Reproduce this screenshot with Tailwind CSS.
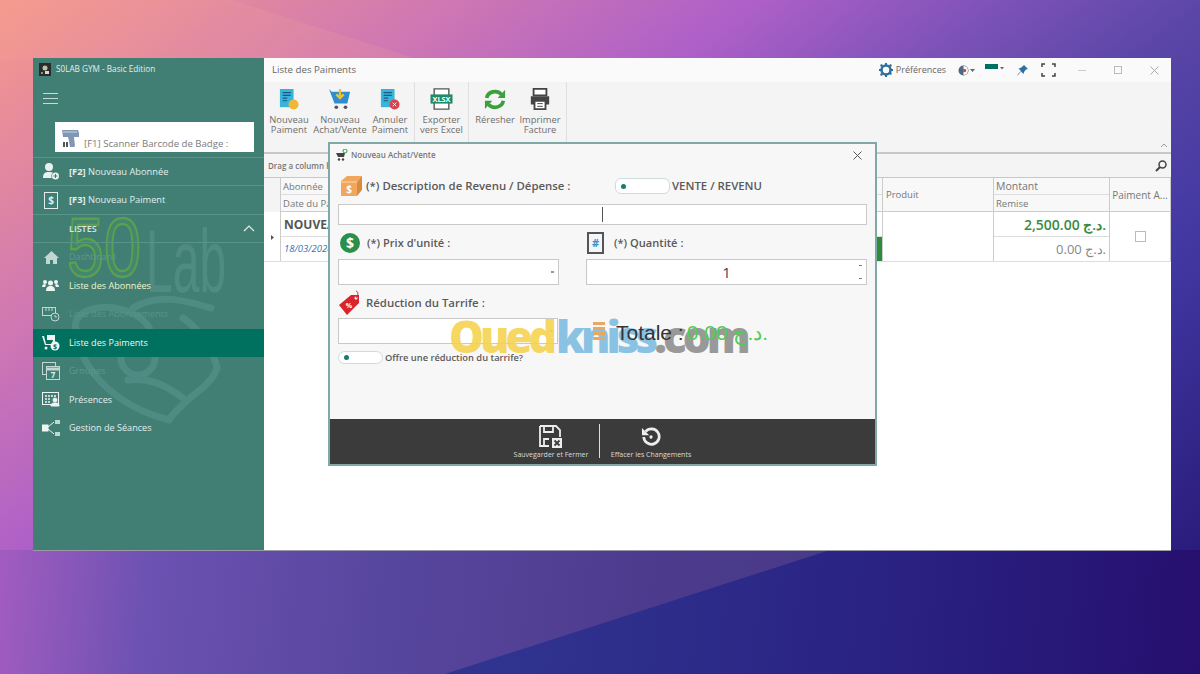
<!DOCTYPE html>
<html lang="en">
<head>
    <meta charset="UTF-8">
    <title>S0LAB GYM - Basic Edition</title>
    <script src="https://cdn.jsdelivr.net/npm/@tailwindcss/browser@4"></script>
</head>
<body class="relative w-[1200px] h-[674px] overflow-hidden font-['Open_Sans',sans-serif] bg-[#6a4bb5]">
    <!-- wallpaper -->
    <svg class="absolute inset-0" width="1200" height="674" viewBox="0 0 1200 674">
        <defs>
            <linearGradient id="bgA" gradientUnits="userSpaceOnUse" x1="0" y1="0" x2="755" y2="1007">
                <stop offset="0" stop-color="#f6998b"/>
                <stop offset="0.2" stop-color="#d27ab0"/>
                <stop offset="0.36" stop-color="#ae60c8"/>
                <stop offset="0.48" stop-color="#7c52b8"/>
                <stop offset="0.58" stop-color="#5a46a6"/>
                <stop offset="0.72" stop-color="#4238a2"/>
                <stop offset="0.92" stop-color="#2a1c7c"/>
            </linearGradient>
            <linearGradient id="bgB" gradientUnits="userSpaceOnUse" x1="500" y1="600" x2="1200" y2="674">
                <stop offset="0" stop-color="#30348f"/>
                <stop offset="0.5" stop-color="#2a2484"/>
                <stop offset="1" stop-color="#260f6e"/>
            </linearGradient>
            <linearGradient id="bgC" gradientUnits="userSpaceOnUse" x1="0" y1="560" x2="820" y2="640">
                <stop offset="0" stop-color="#a25cc0"/>
                <stop offset="0.18" stop-color="#6c52b2"/>
                <stop offset="0.45" stop-color="#58479f"/>
                <stop offset="0.8" stop-color="#4c3b8c"/>
                <stop offset="1" stop-color="#493a88"/>
            </linearGradient>
        </defs>
        <rect width="1200" height="674" fill="url(#bgA)"/>
        <polygon points="0,0 232,0 420,60 0,60" fill="#f4a59a" opacity="0.18"/>
        <polygon points="0,550 830,550 445,674 0,674" fill="url(#bgC)"/>
        <polygon points="830,550 445,674 1200,674 1200,550" fill="url(#bgB)"/>
    </svg>

    <!-- app window -->
    <div class="absolute left-[33px] top-[58px] w-[1138px] h-[492px] flex bg-white shadow-[0_1px_0_#9a9aa8]">
        <!-- sidebar -->
        <aside class="relative w-[231px] shrink-0 bg-[#417f75] text-white overflow-hidden">
            <!-- watermark logo -->
            <svg class="absolute left-0 top-[150px]" width="231" height="280" viewBox="0 0 231 280" fill="none">
                <text transform="translate(34 68) scale(0.95 1.2)" font-family="Liberation Sans" font-size="70" stroke="#59a050" stroke-width="2" fill="#45866f">50</text>
                <text transform="translate(113 84) scale(0.6 1.12)" font-family="Liberation Sans" font-size="80" fill="#4f8b82">Lab</text>
                <g stroke="#4e8b82" stroke-width="7" stroke-linecap="round" stroke-linejoin="round">
                    <ellipse cx="80" cy="122" rx="38" ry="22" transform="rotate(10 80 122)"/>
                    <path d="M42 122 C50 170 90 200 136 212 C150 190 178 180 184 160 C180 140 165 120 150 110"/>
                    <path d="M100 100 C125 85 150 92 178 100"/>
                    <path d="M95 172 C115 170 130 175 150 190"/>
                    <circle cx="105" cy="150" r="17"/>
                </g>
            </svg>

            <div class="relative flex items-center gap-[5px] h-[23px] pl-[6px] text-[8.200px] text-[#e3eeec]">
                <svg width="12" height="13" viewBox="0 0 12 13"><rect width="12" height="13" fill="#2b2b2b"/><circle cx="6" cy="5" r="2.500" fill="#b9c4a8"/><rect x="6" y="8" width="4" height="3" fill="#d9d9d9"/><rect x="2" y="9" width="2" height="2" fill="#8a9a70"/></svg>
                <span>S0LAB GYM - Basic Edition</span>
            </div>
            <div class="relative flex flex-col gap-[4px] w-[15px] ml-[10px] mt-[12px]">
                <div class="h-px bg-[#c7dbd7]"></div><div class="h-px bg-[#c7dbd7]"></div><div class="h-px bg-[#c7dbd7]"></div>
            </div>
            <div class="relative flex items-end ml-[22px] mt-[18px] w-[199px] h-[30px] bg-white pl-[7px] pb-[1px] text-[9.600px] text-[#7b7b7b] gap-[5px]">
                <svg width="17" height="19" viewBox="0 0 17 19" class="mb-[3px]"><path d="M0 1h16l1 3v4h-5l1 9-1 1h-4l-1-6-1-4H1z" fill="#8198b4"/><path d="M1 3h14" stroke="#c9d4e0"/><rect x="1" y="13" width="2" height="5" fill="#555"/><rect x="4" y="13" width="2" height="5" fill="#555"/></svg>
                <span>[F1] Scanner Barcode de Badge :</span>
            </div>

            <div class="relative mt-[5px] flex items-center h-[28px] border-t border-[#5b938a] pl-[10px] gap-[10px] text-[9.300px] text-[#e3eeec]">
                <svg width="16" height="17" viewBox="0 0 16 17" fill="#e8f1ef"><circle cx="6" cy="4" r="4"/><path d="M0 15c0-5 2-6 6-6 2 0 3 .3 4 1-2 1-2 4-1 5z"/><circle cx="12.500" cy="13" r="3.500"/><path d="M12.500 11v4M10.500 13h4" stroke="#417f75" stroke-width="1"/></svg>
                <span><b class="font-bold">[F2]</b> Nouveau Abonnée</span>
            </div>
            <div class="relative flex items-center h-[29px] border-t border-[#5b938a] pl-[11px] gap-[11px] text-[9.300px] text-[#e3eeec]">
                <span class="flex items-center justify-center w-[14px] h-[17px] border border-[#e3eeec] text-[10px] font-bold">$</span>
                <span><b class="font-bold">[F3]</b> Nouveau Paiment</span>
            </div>

            <div class="relative flex items-center justify-between h-[29px] border-t border-b border-[#5b938a] pl-[36px] pr-[9px] text-[9px] font-semibold text-[#dbe8e5]">
                <span>LISTES</span>
                <svg width="12" height="7" viewBox="0 0 12 7" fill="none" stroke="#e3eeec" stroke-width="1.200"><path d="M1 6l5-5 5 5"/></svg>
            </div>

            <nav class="relative text-[9.100px]">
                <div class="flex items-center h-[28.500px] pl-[11px] gap-[10px] text-[#5f978e]">
                    <svg width="15" height="13" viewBox="0 0 15 13" fill="#c2d6d2"><path d="M7.500 0L15 7h-2v6H9V9H6v4H2V7H0z"/></svg><span>Dashboard</span>
                </div>
                <div class="flex items-center h-[28.500px] pl-[9px] gap-[10px] text-[#f0f6c8]">
                    <svg width="17" height="15" viewBox="0 0 17 15" fill="#eef5f3"><circle cx="8.500" cy="5" r="2.500"/><path d="M4 13c0-4 2-5 4.500-5s4.500 1 4.500 5z"/><circle cx="3" cy="4" r="2"/><circle cx="14" cy="4" r="2"/><path d="M0 9c0-2 1-3 3-3l1 1-1 2zM17 9c0-2-1-3-3-3l-1 1 1 2z"/></svg><span>Liste des Abonnées</span>
                </div>
                <div class="flex items-center h-[28.500px] pl-[9px] gap-[9px] text-[#5a9188]">
                    <svg width="18" height="15" viewBox="0 0 18 15" fill="none" stroke="#c2d6d2"><rect x=".5" y=".5" width="13" height="8"/><path d="M4 1v3M7 1v3M10 1v3"/><circle cx="13" cy="10" r="4" fill="#417f75"/><path d="M13 8v2h2"/></svg><span>Liste des Abonnements</span>
                </div>
                <div class="flex items-center h-[28.500px] pl-[9px] gap-[9px] bg-[#00715f] text-[#eef5f3]">
                    <svg width="18" height="16" viewBox="0 0 18 16" fill="#eef5f3"><path d="M0 1h2l2 8h6l1-4H5V0h8v6l-2 4H3z"/><circle cx="4" cy="13" r="1.500"/><circle cx="13" cy="11" r="4.500"/><text x="13" y="14" font-size="7" font-weight="700" text-anchor="middle" fill="#00715f">$</text></svg><span>Liste des Paiments</span>
                </div>
                <div class="flex items-center h-[28.500px] pl-[9px] gap-[9px] text-[#5f978e]">
                    <svg width="18" height="18" viewBox="0 0 18 18" fill="none" stroke="#c2d6d2"><rect x=".5" y=".5" width="13" height="12"/><rect x="4.500" y="4.500" width="13" height="13" fill="#417f75"/><path d="M4 7h14" stroke-width="3"/><text x="11" y="16" font-size="8" font-weight="700" text-anchor="middle" fill="#e3eeec" stroke="none">7</text></svg><span>Groupes</span>
                </div>
                <div class="flex items-center h-[28.500px] pl-[9px] gap-[9px] text-[#e3eeec]">
                    <svg width="18" height="15" viewBox="0 0 18 15" fill="none" stroke="#eef5f3"><rect x=".5" y=".5" width="16" height="12"/><path d="M3 4h11M3 7h6M3 10h6" stroke-width="1.500" stroke-dasharray="2 1"/><circle cx="13" cy="8" r="2" fill="#eef5f3"/><path d="M9 14c0-3 2-3 4-3s4 0 4 3z" fill="#eef5f3"/></svg><span>Présences</span>
                </div>
                <div class="flex items-center h-[28.500px] pl-[9px] gap-[9px] text-[#e3eeec]">
                    <svg width="18" height="16" viewBox="0 0 18 16" fill="none" stroke="#eef5f3"><rect x="0" y="5" width="6" height="6" fill="#eef5f3"/><rect x="13" y="0" width="5" height="4" fill="#c2d6d2" stroke="none"/><rect x="13" y="12" width="5" height="4" fill="#c2d6d2" stroke="none"/><path d="M6 7l6-5M6 9l6 5"/></svg><span>Gestion de Séances</span>
                </div>
            </nav>
        </aside>

        <!-- main panel -->
        <main class="flex-1 flex flex-col min-w-0 bg-white">
            <div class="flex items-center justify-between h-[24px] pl-[8px] bg-[#fafafa] text-[9.700px] text-[#666]">
                <span>Liste des Paiments</span>
                <div class="flex items-center h-full">
                    <svg width="14" height="14" viewBox="0 0 14 14" class="mr-[3px]" fill="#2d6f9e"><circle cx="7" cy="7" r="4.500" fill="none" stroke="#2d6f9e" stroke-width="2.500"/><path d="M6 0h2v2H6zM6 12h2v2H6zM0 6h2v2H0zM12 6h2v2h-2zM2 1l2 1-1 2-2-1zM12 1l1 2-2 1-1-2zM1 11l2-1 1 2-2 1zM13 11l-2 1-1-2 2-1z"/></svg>
                    <span class="mr-[12px] text-[9px]">Préférences</span>
                    <svg width="17" height="11" viewBox="0 0 17 11" class="mr-[10px]"><circle cx="5.500" cy="5.500" r="5" fill="#4a6a86"/><path d="M5.500 1a4.500 4.500 0 0 1 0 9z" fill="#fff"/><circle cx="6.500" cy="5.500" r="1.800" fill="#c8503c"/><path d="M12 4h5l-2.500 3z" fill="#666"/></svg>
                    <svg width="19" height="8" viewBox="0 0 19 8" class="mr-[13px] mb-[4px]"><rect width="13" height="5" fill="#00715f"/><path d="M15 3h4l-2 2.500z" fill="#666"/></svg>
                    <svg width="11" height="11" viewBox="0 0 11 11" class="mr-[13px]" fill="#2d6f9e"><path d="M7 0l4 4-2 .5-2 2.500-.5 2L4 6.500 1 10 0 11l1-2 3-3-2.500-2.500 2-.5 2.500-2z"/></svg>
                    <svg width="15" height="14" viewBox="0 0 15 14" class="mr-[22px]" fill="none" stroke="#444" stroke-width="1.500"><path d="M1 4V1h3M11 1h3v3M14 10v3h-3M4 13H1v-3"/></svg>
                    <div class="w-[8px] h-px bg-[#ccc] mr-[28px]"></div>
                    <div class="w-[8px] h-[8px] border border-[#bbb] mr-[28px]"></div>
                    <svg width="9" height="9" viewBox="0 0 9 9" class="mr-[12px]" stroke="#aaa" fill="none"><path d="M.5.500l8 8M8.500.500l-8 8"/></svg>
                </div>
            </div>

            <!-- ribbon -->
            <div class="relative flex h-[72px] bg-[#f4f4f4] border-b-2 border-[#c8c8c8] text-[9.400px] leading-[10px] text-[#6e6e6e] text-center">
                <div class="flex pl-[4px] pr-[4px] border-r border-[#e0e0e0]">
                    <div class="flex flex-col items-center w-[42px] pt-[6px]">
                        <svg width="20" height="22" viewBox="0 0 22 24"><path d="M1 1h15v20H1z" fill="#38b4dc"/><path d="M4 5h9M4 8h9M4 11h5M4 14h5" stroke="#1a5a80" stroke-width="1.200"/><circle cx="16" cy="18" r="5.500" fill="#f2b632"/></svg>
                        <span class="mt-[5px]">Nouveau<br>Paiment</span>
                    </div>
                    <div class="flex flex-col items-center w-[60px] pt-[6px]">
                        <svg width="22" height="22" viewBox="0 0 24 24"><path d="M0 1l3 3h20l-3 13H6z" fill="#2f8ed0"/><path d="M12 1v9M8 7l4 4 4-4" stroke="#f2c132" stroke-width="2.500" fill="none"/><circle cx="8" cy="21" r="2" fill="#555"/><circle cx="18" cy="21" r="2" fill="#555"/></svg>
                        <span class="mt-[5px] whitespace-nowrap">Nouveau<br>Achat/Vente</span>
                    </div>
                    <div class="flex flex-col items-center w-[40px] pt-[6px]">
                        <svg width="20" height="22" viewBox="0 0 22 24"><path d="M1 1h15v20H1z" fill="#38b4dc"/><path d="M4 5h9M4 8h9M4 11h5M4 14h5" stroke="#1a5a80" stroke-width="1.200"/><circle cx="16" cy="18" r="5.500" fill="#d9434e"/><path d="M14 16l4 4M18 16l-4 4" stroke="#fff"/></svg>
                        <span class="mt-[5px]">Annuler<br>Paiment</span>
                    </div>
                </div>
                <div class="flex flex-col items-center w-[54px] pt-[6px] border-r border-[#e0e0e0]">
                    <svg width="23" height="22" viewBox="0 0 24 24"><path d="M4 1h16v22H4z" fill="#fff" stroke="#555" stroke-width="1.500"/><rect x="0" y="7" width="24" height="10" fill="#1f8a6a"/><text x="12" y="15" font-size="8" font-weight="700" fill="#fff" text-anchor="middle" font-family="Open Sans">XLSX</text></svg>
                    <span class="mt-[5px]">Exporter<br>vers Excel</span>
                </div>
                <div class="flex pl-[3px] pr-[4px] border-r border-[#e0e0e0]">
                    <div class="flex flex-col items-center w-[46px] pt-[6px]">
                        <svg width="22" height="22" viewBox="0 0 24 24" fill="none" stroke="#3aa03c" stroke-width="4"><path d="M3 11a9 8 0 0 1 16-4"/><path d="M21 14a9 8 0 0 1-16 4"/><path d="M23 2v9h-8z" fill="#3aa03c" stroke="none"/><path d="M1 23v-9h8z" fill="#3aa03c" stroke="none"/></svg>
                        <span class="mt-[5px]">Réresher</span>
                    </div>
                    <div class="flex flex-col items-center w-[44px] pt-[6px]">
                        <svg width="22" height="22" viewBox="0 0 24 24"><path d="M5 1h14v7H5z" fill="#fff" stroke="#444" stroke-width="2"/><path d="M2 9h20v9H2z" fill="#444"/><path d="M6 14h12v9H6z" fill="#fff" stroke="#444" stroke-width="2"/><path d="M9 17h6M9 20h6" stroke="#444"/></svg>
                        <span class="mt-[5px]">Imprimer<br>Facture</span>
                    </div>
                </div>
                <svg class="absolute right-[3px] bottom-[4px]" width="8" height="5" viewBox="0 0 8 5" fill="none" stroke="#999"><path d="M1 4l3-3 3 3"/></svg>
            </div>

            <!-- group bar -->
            <div class="flex items-center justify-between h-[24px] pl-[4px] pr-[4px] bg-[#f4f4f4] border-b border-[#c8c8c8] text-[8px] font-semibold text-[#777]">
                <span>Drag a column header here to group by this column</span>
                <svg width="12" height="12" viewBox="0 0 12 12" fill="none" stroke="#444" stroke-width="1.500"><circle cx="7.500" cy="4.500" r="3.500"/><path d="M5 7l-4 4" stroke-width="2"/></svg>
            </div>

            <!-- table -->
            <div class="flex h-[84px] w-[907px] text-[9.500px] text-[#777] border-b border-[#ddd]">
                <div class="relative w-[16px] shrink-0">
                    <div class="h-[34px] bg-[#f4f4f4]"></div>
                    <svg class="absolute left-[7px] top-[57px]" width="3" height="5" viewBox="0 0 3 5" fill="#555"><path d="M0 0l3 2.500L0 5z"/></svg>
                </div>
                <div class="w-[602px] shrink-0 flex flex-col border-l border-[#ccc]">
                    <div class="h-[17px] pl-[2px] pt-[2px] flex items-center border-b border-[#ddd] bg-[#f8f8f8]">Abonnée</div>
                    <div class="h-[17px] pl-[2px] pt-[2px] flex items-center border-b border-[#ccc] bg-[#f8f8f8]">Date du Paiment</div>
                    <div class="h-[25px] pl-[3px] pt-[2px] flex items-center border-b border-[#ddd] text-[12px] font-bold text-[#555]">NOUVEAU</div>
                    <div class="h-[24px] pl-[3px] pt-[1px] flex items-center text-[9.500px] italic text-[#3d73b5]">18/03/2024</div>
                </div>
                <div class="w-[111px] shrink-0 flex flex-col border-l border-[#ccc]">
                    <div class="h-[34px] pl-[3px] pt-[2px] flex items-center border-b border-[#ccc] bg-[#f8f8f8]">Produit</div>
                </div>
                <div class="w-[116px] shrink-0 flex flex-col border-l border-[#ccc]">
                    <div class="h-[17px] pl-[2px] pt-[2px] flex items-center border-b border-[#ddd] bg-[#f8f8f8] text-[10.500px]">Montant</div>
                    <div class="h-[17px] pl-[2px] pt-[2px] flex items-center border-b border-[#ccc] bg-[#f8f8f8]">Remise</div>
                    <div class="h-[25px] pr-[3px] flex items-center justify-end border-b border-[#ddd] text-[14px] font-semibold text-[#3d8a40]">2,500.00 د.ج.</div>
                    <div class="h-[24px] pr-[3px] pt-[1px] flex items-center justify-end text-[13px] text-[#888]">0.00 د.ج.</div>
                </div>
                <div class="flex-1 flex flex-col border-l border-[#ccc] border-r">
                    <div class="h-[34px] pt-[1px] flex items-center justify-center border-b border-[#ccc] bg-[#f8f8f8] text-[10px] whitespace-nowrap">Paiment A...</div>
                    <div class="flex-1 flex items-center justify-center">
                        <div class="w-[11px] h-[11px] border border-[#bbb]"></div>
                    </div>
                </div>
            </div>
            <div class="flex-1 bg-white"></div>
        </main>
    </div>

    <!-- green status cell peeking past dialog -->
    <div class="absolute left-[876px] top-[237px] w-[6px] h-[24px] bg-[#2e8b3a]"></div>

    <!-- dialog -->
    <div class="absolute left-[328px] top-[142px] w-[549px] h-[324px] flex flex-col bg-[#f7f7f7] border-2 border-[#7fa8a6] text-[#5a5a5a]">
        <div class="flex items-center justify-between h-[22px] pl-[6px] pr-[13px] text-[8px] font-semibold text-[#777]">
            <span class="flex items-center gap-[3px]">
                <svg width="12" height="12" viewBox="0 0 12 12"><path d="M0 4h9l-1 4H2z" fill="#444"/><circle cx="3" cy="10.500" r="1.200" fill="#444"/><circle cx="7" cy="10.500" r="1.200" fill="#444"/><circle cx="9" cy="2" r="2" fill="none" stroke="#3a9a3c"/></svg>
                Nouveau Achat/Vente
            </span>
            <svg width="9" height="9" viewBox="0 0 9 9" fill="none" stroke="#555"><path d="M.5.500l8 8M8.500.500l-8 8"/></svg>
        </div>

        <div class="flex-1 pl-[8px] pr-[8px] text-[11.400px] font-semibold">
            <div class="flex items-center h-[26px] mt-[7px]">
                <svg width="23" height="22" viewBox="0 0 23 22" class="ml-[2px]"><path d="M1 6l6-5h15l-5 6v14H1z" fill="#f0a75c"/><path d="M17 7l5-6v14l-5 6z" fill="#d98a3d"/><path d="M1 7h16" stroke="#fbd9ae"/><text x="9" y="18" font-size="10" font-weight="700" text-anchor="middle" fill="#fff">$</text></svg>
                <span class="ml-[3px] w-[249px] whitespace-nowrap">(*) Description de Revenu / Dépense :</span>
                <div class="flex items-center w-[55px] h-[16px] pl-[5px] bg-white border border-[#cfdcdc] rounded-[6px]"><div class="w-[5px] h-[5px] rounded-full bg-[#1c7a70]"></div></div>
                <span class="ml-[2px] whitespace-nowrap">VENTE / REVENU</span>
            </div>

            <div class="relative h-[21px] mt-[5px] bg-white border border-[#c9c9c9]">
                <div class="absolute left-[263px] top-[2px] w-px h-[15px] bg-[#555]"></div>
            </div>

            <div class="flex gap-[27px] mt-[7px] text-[11.100px]">
                <div class="w-[221px]">
                    <div class="flex items-center h-[22px]">
                        <svg width="20" height="20" viewBox="0 0 20 20" class="ml-[2px]"><circle cx="10" cy="10" r="10" fill="#2b8f4c"/><text x="10" y="15" font-size="14" font-weight="700" text-anchor="middle" fill="#fff">$</text></svg>
                        <span class="ml-[7px] mt-px">(*) Prix d'unité :</span>
                    </div>
                    <div class="flex items-center justify-end h-[26px] mt-[5px] pr-[4px] bg-white border border-[#c9c9c9]">
                        <div class="w-[3px] h-[2px] bg-[#999]"></div>
                    </div>
                </div>
                <div class="flex-1">
                    <div class="flex items-center h-[22px]">
                        <span class="flex items-center justify-center w-[17px] h-[22px] ml-[1px] bg-[#f1f6fa] border-2 border-[#555] text-[11px] font-bold text-[#3f8ec9]">#</span>
                        <span class="ml-[10px] mt-px">(*) Quantité :</span>
                    </div>
                    <div class="relative flex items-center justify-center h-[26px] mt-[5px] bg-white border border-[#c9c9c9] text-[15px] font-normal text-[#444]">
                        1
                        <div class="absolute right-[4px] top-[5px] w-[3px] h-px bg-[#777]"></div>
                        <div class="absolute right-[4px] bottom-[5px] w-[3px] h-px bg-[#777]"></div>
                    </div>
                </div>
            </div>

            <div class="flex items-center h-[26px] mt-[5px]">
                <svg width="24" height="26" viewBox="0 0 24 26"><path d="M1 15L13 5h8v8L9 25z" fill="#d9242c"/><circle cx="18" cy="8" r="1.500" fill="#fff"/><path d="M18 8c2-3 3-6 0-7" fill="none" stroke="#d9242c"/><text x="11" y="18" font-size="7" font-weight="700" text-anchor="middle" fill="#fff">%</text></svg>
                <span class="ml-[4px]">Réduction du Tarrife :</span>
            </div>

            <div class="relative h-[26px] mt-[2px]">
                <div class="flex items-center justify-end w-[220px] h-full pr-[4px] bg-white border border-[#c9c9c9]"><div class="w-[3px] h-[2px] bg-[#999]"></div></div>
            </div>

            <div class="flex items-center h-[13px] mt-[7px] text-[9.300px]">
                <div class="flex items-center w-[45px] h-[13px] pl-[5px] bg-white border border-[#cfdcdc] rounded-[7px]"><div class="w-[5px] h-[5px] rounded-full bg-[#1c7a70]"></div></div>
                <span class="ml-[2px]">Offre une réduction du tarrife?</span>
            </div>
        </div>

        <!-- dialog footer -->
        <div class="flex h-[45px] bg-[#3b3b3b] text-[7px] text-[#dcdcdc] pl-[173px]">
            <div class="flex flex-col items-center w-[96px] pt-[6px]">
                <svg width="24" height="24" viewBox="0 0 24 24" fill="none" stroke="#eee" stroke-width="1.800"><path d="M1 1h16l4 4v7M10 21H1V1M5 1v6h9V1M5 21v-7h5"/><rect x="13" y="13" width="10" height="10" fill="#eee" stroke="none"/><path d="M15.500 15.500l5 5M20.500 15.500l-5 5" stroke="#3b3b3b"/></svg>
                <span class="mt-px whitespace-nowrap">Sauvegarder et Fermer</span>
            </div>
            <div class="w-px h-[34px] mt-[5px] bg-[#ddd]"></div>
            <div class="flex flex-col items-center w-[102px] pt-[8px]">
                <svg width="20" height="20" viewBox="0 0 22 22" fill="none" stroke="#eee" stroke-width="3"><path d="M5 5a8.500 8.500 0 1 1-2 6"/><path d="M1 1v8h8" fill="#eee" stroke="none"/><circle cx="11" cy="11" r="1.800" fill="#eee" stroke="none"/></svg>
                <span class="mt-[3px] whitespace-nowrap">Effacer les Changements</span>
            </div>
        </div>
    </div>

    <!-- ouedkniss watermark, then total on top -->
    <div class="absolute left-[449px] top-[310px] flex text-[44px] leading-[52px] font-extrabold tracking-[-4px] opacity-90">
        <span class="text-[#f5d350]">Oued</span><span class="text-[#7fbde3] ml-[3px]">kniss</span><span class="text-[#8f8f8f]">.com</span>
    </div>
    <svg class="absolute left-[592px] top-[321px]" width="14" height="24" viewBox="0 0 14 24"><path d="M1 1h12v3H1zM1 6h12v3H1zM1 11h12v3H1zM1 16h12v3H1z" fill="#e8a860"/></svg>
    <div class="absolute left-[616px] top-[320px] flex items-center leading-[26px] text-[21px] font-['Liberation_Sans',sans-serif]">
        <span class="text-[#333]">Totale :</span>
        <span class="ml-[3px] text-[#4fce4f]">0.00 د.ج.</span>
    </div>
</body>
</html>
